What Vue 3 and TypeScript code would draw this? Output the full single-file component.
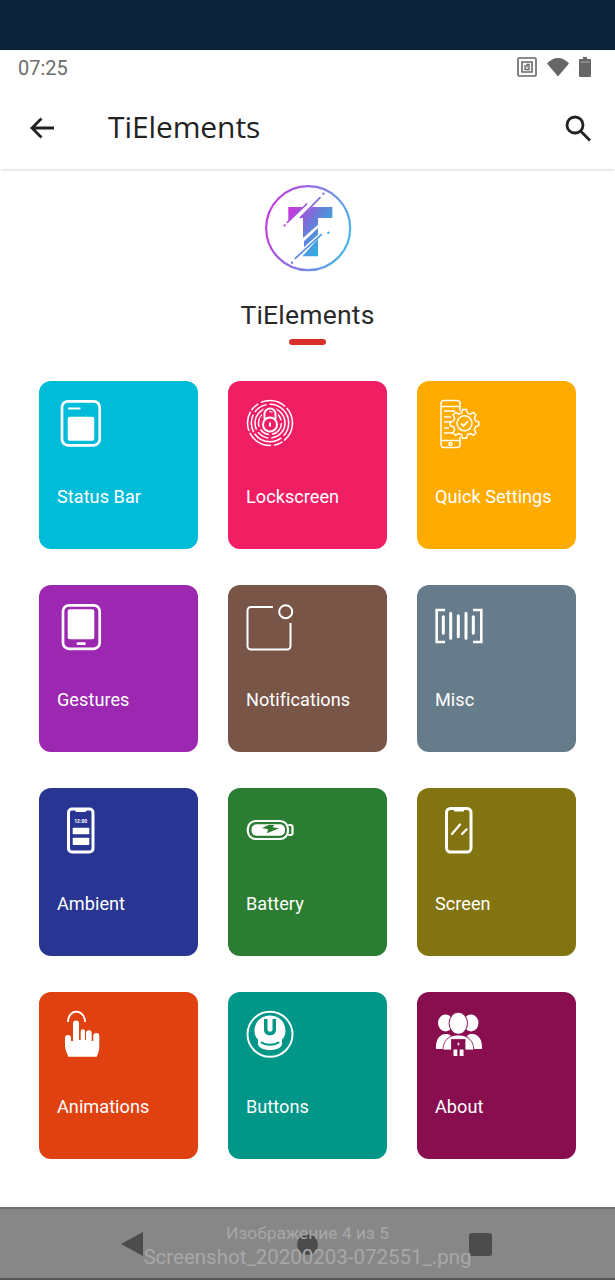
<script setup lang="ts">
interface Tile { name: string; color: string; icon: string }
const tiles: Tile[] = [
  { name: 'Status Bar', color: '#00bcd8', icon: 'status' },
  { name: 'Lockscreen', color: '#f01e63', icon: 'lock' },
  { name: 'Quick Settings', color: '#ffab00', icon: 'quick' },
  { name: 'Gestures', color: '#9c27b0', icon: 'gestures' },
  { name: 'Notifications', color: '#795548', icon: 'notif' },
  { name: 'Misc', color: '#667c8a', icon: 'misc' },
  { name: 'Ambient', color: '#283593', icon: 'ambient' },
  { name: 'Battery', color: '#2b7d32', icon: 'battery' },
  { name: 'Screen', color: '#827410', icon: 'screen' },
  { name: 'Animations', color: '#e04110', icon: 'anim' },
  { name: 'Buttons', color: '#009688', icon: 'buttons' },
  { name: 'About', color: '#880e4f', icon: 'about' },
]
</script>

<template>
  <div class="page">
    <div class="topband"></div>
    <div class="status">
      <span class="time">07:25</span>
      <div class="status-icons">
        <svg width="20" height="20" viewBox="0 0 20 20" fill="none" stroke="#666">
          <rect x="1" y="1" width="18" height="18" rx="1" stroke-width="1.6" />
          <path d="M5 5h10v10H5z" stroke-width="1.6" />
          <path d="M8 8v4.5h4V7.5h-2v3" stroke-width="1.4" />
        </svg>
        <svg width="22" height="20" viewBox="0 0 22 20"><path d="M0 6.5C3 3 7 1 11 1s8 2 11 5.500L11 19.500z" fill="#666" /></svg>
        <svg width="12" height="20" viewBox="0 0 12 20"><path d="M4 0h4v2h3a1 1 0 0 1 1 1v16a1 1 0 0 1-1 1H1a1 1 0 0 1-1-1V3a1 1 0 0 1 1-1h3z" fill="#666" /><path d="M1.500 5h9" stroke="#aaa" stroke-width="1" /></svg>
      </div>
    </div>
    <header class="appbar">
      <svg class="back" width="26" height="24" viewBox="0 0 26 24" fill="none" stroke="#222" stroke-width="2.800">
        <path d="M25 12H3M12.500 2.500 3 12l9.500 9.500" />
      </svg>
      <h1 class="apptitle">TiElements</h1>
      <svg class="search" width="28" height="28" viewBox="0 0 28 28" fill="none" stroke="#222" stroke-width="2.800">
        <circle cx="11" cy="11" r="8" />
        <path d="m16.500 17 9.500 9.500" />
      </svg>
    </header>

    <section class="hero">
      <svg width="90" height="90" viewBox="127 25 270 270" fill="none">
        <defs>
          <linearGradient id="ring" gradientUnits="userSpaceOnUse" x1="135" y1="120" x2="390" y2="200">
            <stop offset="0" stop-color="#c93ae0" />
            <stop offset="1" stop-color="#45b8e8" />
          </linearGradient>
          <linearGradient id="tee" gradientUnits="userSpaceOnUse" x1="200" y1="110" x2="335" y2="190">
            <stop offset="0" stop-color="#cc34df" />
            <stop offset="0.5" stop-color="#6f78d8" />
            <stop offset="1" stop-color="#22bde6" />
          </linearGradient>
        </defs>
        <circle cx="262.500" cy="160.500" r="126" stroke="url(#ring)" stroke-width="6.500" />
        <polygon points="203,97 248,97 203,138" fill="url(#tee)" />
        <polygon points="275,97 335,97 335,130 292,130 292,150 247,190 247,130 235,130" fill="url(#tee)" />
        <polygon points="292,160 292,180 250,218 250,200" fill="url(#tee)" />
        <polygon points="292,192 292,245 245,245" fill="url(#tee)" />
        <g stroke="url(#tee)" stroke-width="5" stroke-linecap="round">
          <path d="M200 143 258 88M240 128l58-59M224 251l78-71" />
          <path d="M192 152h.1M308 57h.1M214 264h.1M323 174h.1" stroke-width="7" />
        </g>
      </svg>
      <h2 class="herotitle">TiElements</h2>
      <div class="underline"></div>
    </section>

    <main class="grid">
      <div v-for="t in tiles" :key="t.name" class="tile" :style="{ background: t.color }">
        <svg class="icon" width="60" height="60" viewBox="14 12 60 60" fill="none" stroke="#fff">
          <g v-if="t.icon === 'status'">
            <rect x="23" y="20.300" width="37.700" height="44" rx="6" stroke-width="2.700" />
            <path d="M29 27.500h12.500" stroke-width="2" />
            <rect x="28.700" y="35.700" width="26.600" height="24" rx="2" fill="#fff" stroke="none" />
          </g>
          <g v-else-if="t.icon === 'lock'" stroke-width="1.500">
            <circle cx="42" cy="42" r="22.500" stroke-dasharray="20 2 9 3 26 2" />
            <circle cx="42" cy="42" r="18.700" stroke-dasharray="14 3 30 2 18 3" />
            <circle cx="42" cy="42" r="15" stroke-dasharray="22 3 12 3 30 2" />
            <circle cx="42" cy="42" r="11.500" stroke-dasharray="16 3 10 3 18 3" />
            <path d="M36.500 38v-5a5.500 5.500 0 0 1 11 0v5" stroke="#f01e63" stroke-width="5" />
            <circle cx="42" cy="43" r="9" fill="#f01e63" stroke="none" />
            <path d="M36.500 38v-5a5.500 5.500 0 0 1 11 0v5" stroke-width="2" />
            <circle cx="42" cy="43.500" r="7" stroke-width="2" />
            <path d="M42 41.500v4" stroke-width="2" />
          </g>
          <g v-else-if="t.icon === 'quick'" stroke-width="1.500">
            <path d="M43 30V22.500a3 3 0 0 0-3-3H27a3 3 0 0 0-3 3v41a3 3 0 0 0 3 3h13a3 3 0 0 0 3-3V56" />
            <path d="M24 25.500h19M24 59.500h19M27 30h11M27 36h7M27 41h8M27 47h5M27 52h9" />
            <circle cx="33.500" cy="63" r="1.500" />
            <path d="M45 29.500h4l1 3.500 3 1.300 3.300-1.800 2.800 2.800-1.800 3.300 1.300 3 3.500 1v4l-3.500 1-1.300 3 1.800 3.300-2.800 2.800-3.300-1.800-3 1.300-1 3.500h-4l-1-3.500-3-1.300-3.300 1.800-2.800-2.800 1.800-3.300-1.300-3-3.500-1v-4l3.500-1 1.300-3-1.800-3.300 2.800-2.800 3.300 1.800 3-1.300z" transform="translate(47.500 42.300) scale(.95) translate(-47 -44)" />
            <circle cx="47.500" cy="42.300" r="7.500" />
            <path d="m44 42.500 2.500 2.500 4.500-5" stroke-width="1.800" />
          </g>
          <g v-else-if="t.icon === 'gestures'">
            <rect x="24" y="20.300" width="36.700" height="43.500" rx="6" stroke-width="2.700" />
            <rect x="28.700" y="24.300" width="26.600" height="30" rx="2" fill="#fff" stroke="none" />
            <rect x="37.700" y="57.300" width="9" height="2.800" rx="1" fill="#fff" stroke="none" />
          </g>
          <g v-else-if="t.icon === 'notif'" stroke-width="2">
            <path d="M45 22H23a3.500 3.500 0 0 0-3.500 3.500V61a3.500 3.500 0 0 0 3.500 3.500h36a3.500 3.500 0 0 0 3.500-3.500V38" />
            <circle cx="57.700" cy="26.700" r="6.500" />
          </g>
          <g v-else-if="t.icon === 'misc'" stroke-width="2.600">
            <path d="M28 25h-8.300v32H28M56 25h8.300v32H56" />
            <path d="M26.300 31.700v16.600M33.700 28.300v25M41.300 30.700v21M49 28.300v25M56.300 31.700v16.600" stroke-width="3" stroke-linecap="round" />
          </g>
          <g v-else-if="t.icon === 'ambient'">
            <rect x="29.500" y="21" width="24.500" height="43" rx="3.500" stroke-width="3" />
            <path d="M35.500 21.500h12.500l-1.500 2.500h-9.500z" fill="#fff" stroke="none" />
            <text x="41.700" y="35" class="clock" text-anchor="middle">12:00</text>
            <rect x="33.700" y="39.700" width="16.600" height="6.600" rx=".8" fill="#fff" stroke="none" />
            <rect x="33.700" y="49.700" width="16.600" height="7.300" rx=".8" fill="#fff" stroke="none" />
          </g>
          <g v-else-if="t.icon === 'battery'" stroke-width="2.200">
            <rect x="19.800" y="33" width="40.200" height="18" rx="8" />
            <path d="M60.300 37h2.200a2 2 0 0 1 2 2v6a2 2 0 0 1-2 2h-2.200" />
            <rect x="23.500" y="36.300" width="33.500" height="11.400" rx="5" fill="#fff" stroke="none" />
            <path d="m40.500 37-6.500 3 6 1.300-1 4 12-5-6.500-1 1.800-2.300z" fill="#2b7d32" stroke="none" />
          </g>
          <g v-else-if="t.icon === 'screen'" stroke-width="3">
            <rect x="29.500" y="20.500" width="24.500" height="43.500" rx="4" />
            <path d="M36 21h12l-1.500 2.500h-9z" fill="#fff" stroke="none" />
            <path d="m35 46 8-9.500M45 46l4.700-4.700" stroke-width="2.200" stroke-linecap="round" />
          </g>
          <g v-else-if="t.icon === 'anim'">
            <path d="M29 30c0-6 3.500-10.300 8.300-10.300S46 24 46 30" stroke-width="1.800" />
            <path d="M34 31.500a3 3 0 0 1 6 0V48h1.700V39a2.200 2.200 0 0 1 4.300 0v9h1V41a2.800 2.800 0 0 1 5.700 0v8h1.600v-5a3 3 0 0 1 6 0v11c0 4-1.500 7-2.600 9.700H29.300c-.8-3-3.300-7-3.300-11V46a3 3 0 0 1 6 0v3h2z" fill="#fff" stroke="none" />
          </g>
          <g v-else-if="t.icon === 'buttons'">
            <circle cx="42" cy="42.300" r="22.500" stroke-width="2" />
            <path d="M42 23.500c9 0 15.500 6.500 15.500 15.500 0 4-1.500 6.500-3.500 8.500v4c0 4-5 6.500-12 6.500s-12-2.500-12-6.500v-4c-2-2-3.500-4.500-3.500-8.500 0-9 6.500-15.500 15.500-15.500z" fill="#fff" stroke="none" />
            <path d="M36 27h3.500v10.500c0 3 5 3 5 0V27H48v11c0 7-12 7-12 0z" fill="#009688" stroke="none" />
            <path d="M33.500 50.500c4 3 13 3 17 0" stroke="#009688" stroke-width="2" stroke-linecap="round" />
          </g>
          <g v-else-if="t.icon === 'about'" stroke="none" fill="#fff">
            <ellipse cx="28.500" cy="31" rx="7.500" ry="8.500" />
            <ellipse cx="54" cy="31" rx="7.500" ry="8.500" />
            <path d="M19 57c-.5-8 2.500-15 10-15 2 0 4 .5 5 2l-5 6-2 7zM65 57c.5-8-2.500-15-10-15-2 0-4 .5-5 2l5 6 2 7z" />
            <ellipse cx="41.300" cy="31.300" rx="9.200" ry="11" stroke="#880e4f" stroke-width="1" />
            <path d="M26 58c0-9 5.500-15 15.300-15s15.500 6 15.500 15h-8.800V47.500H34.500V58z" stroke="#880e4f" stroke-width=".8" />
            <rect x="35" y="48" width="13" height="8" fill="#880e4f" />
            <path d="M41.800 49.500 40 52.500h1.500l-.5 2 2-3h-1.500z" />
            <path d="M36.500 57.500h3.800V64h-3.800zM42.700 57.500h3.800V64h-3.800z" />
          </g>
        </svg>
        <span class="label">{{ t.name }}</span>
      </div>
    </main>

    <footer class="navbar">
      <div class="nav-icons">
        <svg width="23" height="24" viewBox="0 0 23 24"><path d="M22 0v24L0 12z" fill="#4c4c4c" /></svg>
        <span class="dot"></span>
        <span class="square"></span>
      </div>
      <div class="caption">
        <span class="cap1">Изображение 4 из 5</span>
        <span class="cap2">Screenshot_20200203-072551_.png</span>
      </div>
    </footer>
  </div>
</template>

<style scoped>
.page {
  position: relative;
  width: 615px;
  height: 1280px;
  background: #fff;
  display: flex;
  flex-direction: column;
  overflow: hidden;
  font-family: Roboto, "Liberation Sans", sans-serif;
}
.topband {
  height: 50px;
  background: #0b2239;
  flex: none;
}
.status {
  height: 36px;
  flex: none;
  display: flex;
  align-items: center;
  justify-content: space-between;
  padding: 0 24px 0 18px;
}
.time {
  font-size: 20px;
  color: #6d6d6d;
}
.status-icons {
  display: flex;
  gap: 10px;
  align-items: center;
  margin-top: -2px;
}
.appbar {
  height: 83px;
  flex: none;
  display: flex;
  align-items: center;
  padding: 0 23px 0 29px;
  box-shadow: 0 2px 2px -1px rgba(0, 0, 0, 0.16);
  position: relative;
}
.back { flex: none; margin-top: 0; }
.apptitle {
  margin: -2px 0 0 53px;
  font-size: 30px;
  font-weight: 500;
  color: #222;
  flex: 1;
  font-family: "Open Sans", Roboto, sans-serif;
  letter-spacing: -0.1px;
}
.search { flex: none; }
.hero {
  display: flex;
  flex-direction: column;
  align-items: center;
  padding-top: 14px;
  height: 212px;
  box-sizing: border-box;
  flex: none;
}
.herotitle {
  margin: 24px 0 0;
  font-size: 26.500px;
  line-height: 36px;
  font-weight: 400;
  color: #2a2a2a;
  letter-spacing: 0.2px;
}
.underline {
  width: 37px;
  height: 6px;
  margin-top: 6px;
  border-radius: 3px;
  background: #d9302c;
}
.grid {
  display: grid;
  grid-template-columns: repeat(3, 159px);
  grid-auto-rows: 167.500px;
  column-gap: 30px;
  row-gap: 36px;
  padding: 0 39px;
  flex: none;
}
.tile {
  border-radius: 12px;
  padding: 12px 14px;
  box-sizing: border-box;
  display: flex;
  flex-direction: column;
}
.icon { flex: none; display: block; }
.clock {
  font-size: 5px;
  font-weight: 700;
  fill: #fff;
  stroke: none;
  font-family: Roboto, sans-serif;
}
.label {
  margin: 33.500px 0 0 4px;
  font-size: 18.100px;
  line-height: 20px;
  letter-spacing: 0.05px;
  color: #fff;
  white-space: nowrap;
}
.navbar {
  position: absolute;
  left: 0;
  right: 0;
  bottom: 0;
  height: 73px;
  box-sizing: border-box;
  background: #878787;
  border-top: 2px solid #6f6f6f;
  border-bottom: 2px solid #555;
}
.nav-icons {
  display: flex;
  justify-content: space-between;
  align-items: center;
  padding: 23px 123px 0 121px;
}
.dot {
  width: 21px;
  height: 21px;
  border-radius: 50%;
  background: #4c4c4c;
  margin-left: 2px;
}
.square {
  width: 23px;
  height: 23px;
  border-radius: 3px;
  background: #4c4c4c;
}
.caption {
  position: absolute;
  left: 0;
  right: 0;
  top: 12px;
  display: flex;
  flex-direction: column;
  align-items: center;
  color: #a8a8a8;
}
.cap1 {
  font-size: 17.400px;
  line-height: 24px;
}
.cap2 {
  font-size: 20.500px;
  line-height: 24px;
}
</style>
